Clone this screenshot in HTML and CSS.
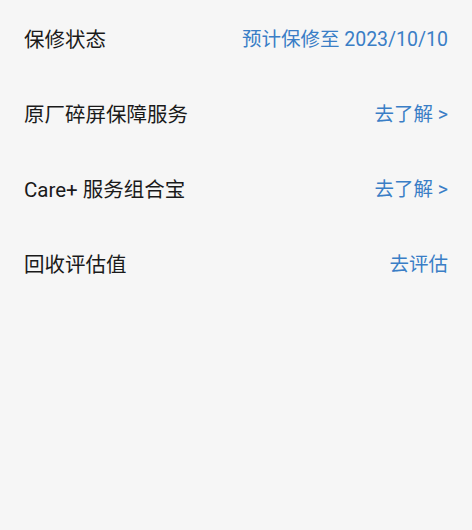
FILE: index.html
```html
<!DOCTYPE html>
<html lang="zh-CN">
<head>
    <meta charset="UTF-8">
    <meta name="viewport" content="width=device-width, initial-scale=1.0">
    <title>服务</title>
    <link rel="stylesheet" href="styles.css">
</head>
<body>
    <div class="list">
        <div class="row">
            <span class="label">保修状态</span>
            <span class="value">预计保修至 2023/10/10</span>
        </div>
        <div class="row">
            <span class="label">原厂碎屏保障服务</span>
            <a class="value" href="#">去了解 &gt;</a>
        </div>
        <div class="row">
            <span class="label">Care+ 服务组合宝</span>
            <a class="value" href="#">去了解 &gt;</a>
        </div>
        <div class="row">
            <span class="label">回收评估值</span>
            <a class="value" href="#">去评估</a>
        </div>
    </div>
</body>
</html>
```

FILE: styles.css
```css
body {
    font-family: Roboto, "Noto Sans CJK SC", sans-serif;
    background-color: #f6f6f6;
    margin: 0;
    padding: 0;
}

.list {
    padding: 0 24px;
}

.row {
    display: flex;
    justify-content: space-between;
    align-items: center;
    height: 75px;
}

.label {
    font-size: 20.5px;
    color: #1a1a1a;
}

.value {
    font-size: 19.5px;
    color: #3a7ec6;
    text-decoration: none;
}
```
